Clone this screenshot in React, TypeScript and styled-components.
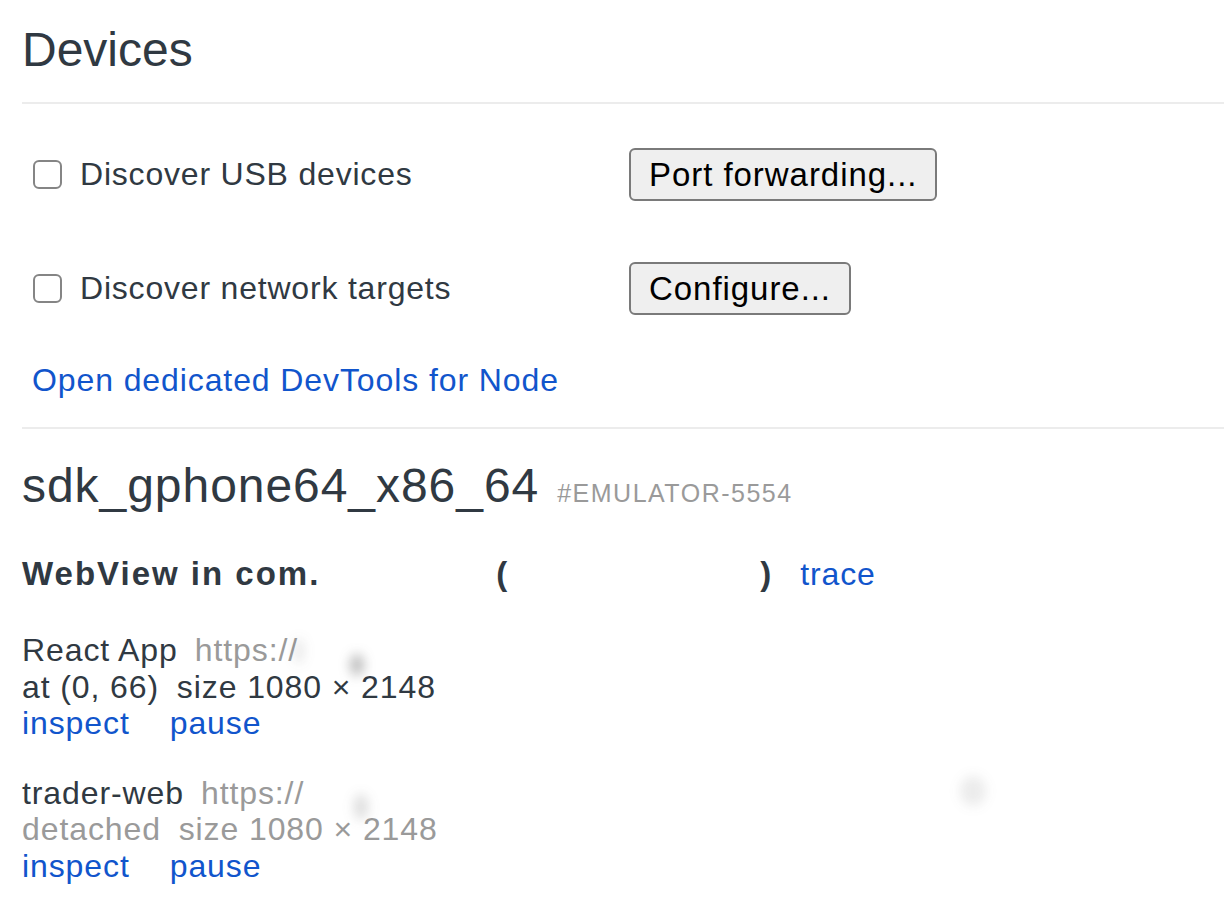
import React from "react"
import styled, { createGlobalStyle } from "styled-components"

const GlobalStyle = createGlobalStyle`
    body {
        margin: 0;
        background: #ffffff;
        font-family: "Liberation Sans", Arial, sans-serif;
        color: #303942;
    }
`

const Page = styled.main`
    padding: 21px 0 40px 22px;
`
const Title = styled.h1`
    margin: 0;
    font-size: 48px;
    font-weight: 400;
    line-height: 58px;
`
const Rule = styled.hr<{ $top: number }>`
    margin: ${(p) => p.$top}px 0 0 0;
    border: none;
    height: 2px;
    background: #ececec;
`
const OptionRow = styled.div<{ $top: number }>`
    display: flex;
    align-items: center;
    height: 53px;
    margin-top: ${(p) => p.$top}px;
`
const OptionLabel = styled.label`
    display: flex;
    align-items: center;
    width: 607px;
    font-size: 32px;
    letter-spacing: 0.8px;
`
const Check = styled.input.attrs({ type: "checkbox" })`
    appearance: none;
    box-sizing: border-box;
    width: 29px;
    height: 29px;
    margin: 0 18px 0 11px;
    border: 2px solid #858585;
    border-radius: 6px;
    background: #fff;
`
const Button = styled.button`
    box-sizing: border-box;
    height: 53px;
    padding: 0 18px;
    border: 2px solid #7a7a7a;
    border-radius: 6px;
    background: #efefef;
    color: #000;
    font-family: "Liberation Sans", Arial, sans-serif;
    font-size: 33px;
    letter-spacing: 0.95px;
`
const Link = styled.a<{ $gap?: number }>`
    color: #1155cc;
    text-decoration: none;
    margin-left: ${(p) => p.$gap ?? 0}px;
`
const NodeLink = styled.div`
    margin: 47px 0 0 10px;
    font-size: 32px;
    line-height: 37px;
    letter-spacing: 0.9px;
`
const DeviceHeader = styled.div`
    display: flex;
    align-items: baseline;
    margin-top: 28px;
    height: 58px;
`
const DeviceName = styled.h2`
    margin: 0;
    font-size: 48px;
    font-weight: 400;
    line-height: 58px;
    letter-spacing: 0.95px;
`
const Serial = styled.span`
    margin-left: 18px;
    font-size: 25px;
    color: #9a9a9a;
    letter-spacing: 1.5px;
    text-transform: uppercase;
`
const BrowserLine = styled.div`
    display: flex;
    align-items: baseline;
    margin-top: 39px;
    font-size: 32px;
    line-height: 40px;
    letter-spacing: 0.9px;
`
const BrowserName = styled.span`
    font-weight: 700;
    font-size: 33px;
    letter-spacing: 2px;
`
const Paren = styled.span<{ $gap: number }>`
    margin-left: ${(p) => p.$gap}px;
    font-weight: 700;
    font-size: 33px;
`
const Target = styled.div<{ $top: number }>`
    margin-top: ${(p) => p.$top}px;
    font-size: 32px;
    line-height: 36.5px;
    letter-spacing: 0.9px;
`
const TargetLine = styled.div<{ $muted?: boolean }>`
    white-space: nowrap;
    color: ${(p) => (p.$muted ? "#9a9a9a" : "#303942")};
`
const Url = styled.span`
    margin-left: 17px;
    color: #9a9a9a;
`
const Gap = styled.span<{ $w: number }>`
    display: inline-block;
    width: ${(p) => p.$w}px;
`
const Smudge = styled.span<{ $w: number; $h: number; $dx: number; $dy: number; $o: number }>`
    display: inline-block;
    width: ${(p) => p.$w}px;
    height: ${(p) => p.$h}px;
    margin-left: ${(p) => p.$dx}px;
    transform: translateY(${(p) => p.$dy}px);
    border-radius: 50%;
    background: rgba(60, 60, 60, ${(p) => p.$o});
    filter: blur(6px);
    vertical-align: middle;
`

export default function App() {
    return (
        <Page>
            <GlobalStyle />
            <Title>Devices</Title>
            <Rule $top={23} />

            <OptionRow $top={44}>
                <OptionLabel>
                    <Check />
                    Discover USB devices
                </OptionLabel>
                <Button>Port forwarding...</Button>
            </OptionRow>

            <OptionRow $top={61}>
                <OptionLabel>
                    <Check />
                    Discover network targets
                </OptionLabel>
                <Button>Configure...</Button>
            </OptionRow>

            <NodeLink>
                <Link href="#">Open dedicated DevTools for Node</Link>
            </NodeLink>
            <Rule $top={28} />

            <DeviceHeader>
                <DeviceName>sdk_gphone64_x86_64</DeviceName>
                <Serial>#emulator-5554</Serial>
            </DeviceHeader>

            <BrowserLine>
                <BrowserName>WebView in com.</BrowserName>
                <Paren $gap={176}>(</Paren>
                <Paren $gap={252}>)</Paren>
                <Link href="#" $gap={28}>trace</Link>
            </BrowserLine>

            <Target $top={38}>
                <TargetLine>
                    React App<Url>https://</Url>
                    <Smudge $w={10} $h={26} $dx={-4} $dy={-2} $o={0.12} />
                    <Smudge $w={14} $h={22} $dx={46} $dy={12} $o={0.35} />
                </TargetLine>
                <TargetLine>
                    at (0, 66)<Gap $w={8} /> size 1080 × 2148
                </TargetLine>
                <TargetLine>
                    <Link href="#">inspect</Link>
                    <Link href="#" $gap={40}>pause</Link>
                </TargetLine>
            </Target>

            <Target $top={33}>
                <TargetLine>
                    trader-web<Url>https://</Url>
                    <Smudge $w={14} $h={26} $dx={50} $dy={12} $o={0.18} />
                    <Smudge $w={26} $h={30} $dx={592} $dy={-4} $o={0.1} />
                </TargetLine>
                <TargetLine $muted>
                    detached<Gap $w={8} /> size 1080 × 2148
                </TargetLine>
                <TargetLine>
                    <Link href="#">inspect</Link>
                    <Link href="#" $gap={40}>pause</Link>
                </TargetLine>
            </Target>
        </Page>
    )
}
